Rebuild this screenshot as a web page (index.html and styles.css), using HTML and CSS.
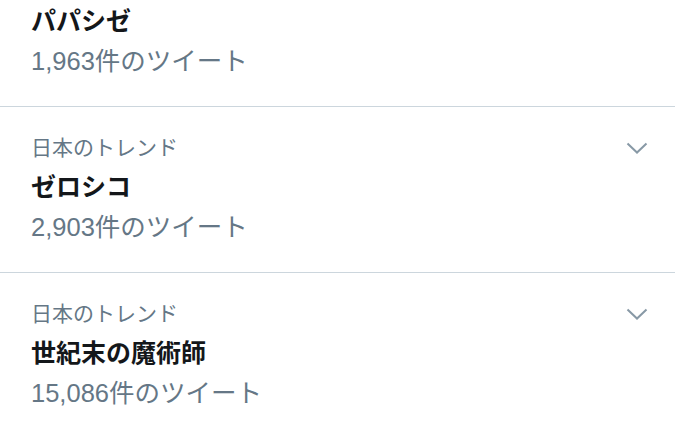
FILE: index.html
```html
<!DOCTYPE html>
<html lang="ja">
<head>
  <meta charset="UTF-8">
  <meta name="viewport" content="width=device-width, initial-scale=1.0">
  <title>トレンド</title>
  <link rel="stylesheet" href="styles.css">
</head>
<body>
  <div class="trends">
    <div class="trend first">
      <div class="name">パパシゼ</div>
      <div class="count">1,963件のツイート</div>
    </div>

    <div class="trend">
      <div class="head">
        <span class="label">日本のトレンド</span>
        <svg class="chevron" width="22" height="12" viewBox="0 0 22 12">
          <polyline points="1.5,1.5 11,10.5 20.5,1.5" />
        </svg>
      </div>
      <div class="name">ゼロシコ</div>
      <div class="count">2,903件のツイート</div>
    </div>

    <div class="trend">
      <div class="head">
        <span class="label">日本のトレンド</span>
        <svg class="chevron" width="22" height="12" viewBox="0 0 22 12">
          <polyline points="1.5,1.5 11,10.5 20.5,1.5" />
        </svg>
      </div>
      <div class="name">世紀末の魔術師</div>
      <div class="count">15,086件のツイート</div>
    </div>
  </div>
</body>
</html>
```

FILE: styles.css
```css
body {
  margin: 0;
  background: #fff;
  font-family: "Liberation Sans", "Noto Sans CJK JP", sans-serif;
  color: #14171a;
}
.trend {
  padding: 26px 28px 25px 31px;
  border-bottom: 1px solid #ccd6dd;
}
.trend.first {
  padding-top: 1px;
}
.head {
  display: flex;
  justify-content: space-between;
  align-items: center;
  height: 30px;
  margin-bottom: 4px;
}
.label {
  font-size: 21px;
  line-height: 30px;
  color: #657786;
}
.chevron {
  margin-right: -1px;
}
.chevron polyline {
  fill: none;
  stroke: #8899a6;
  stroke-width: 2;
}
.name {
  font-size: 25px;
  font-weight: bold;
  line-height: 40px;
}
.count {
  font-size: 25.5px;
  line-height: 40px;
  color: #657786;
}
```
